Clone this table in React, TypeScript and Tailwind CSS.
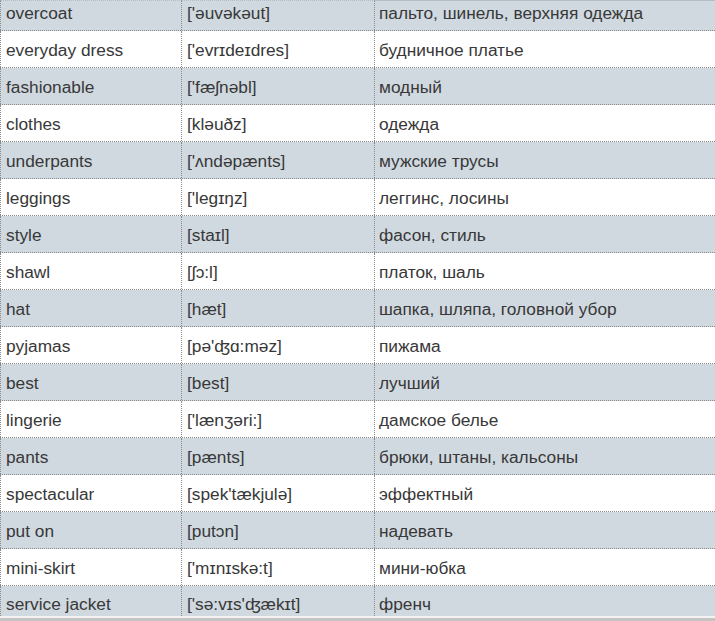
import React from "react";

const rows: [string, string, string][] = [
  ["overcoat", "['əuvəkəut]", "пальто, шинель, верхняя одежда"],
  ["everyday dress", "['evrɪdeɪdres]", "будничное платье"],
  ["fashionable", "['fæʃnəbl]", "модный"],
  ["clothes", "[kləuðz]", "одежда"],
  ["underpants", "['ʌndəpænts]", "мужские трусы"],
  ["leggings", "['legɪŋz]", "леггинс, лосины"],
  ["style", "[staɪl]", "фасон, стиль"],
  ["shawl", "[ʃɔ:l]", "платок, шаль"],
  ["hat", "[hæt]", "шапка, шляпа, головной убор"],
  ["pyjamas", "[pə'ʤɑ:məz]", "пижама"],
  ["best", "[best]", "лучший"],
  ["lingerie", "['lænʒəri:]", "дамское белье"],
  ["pants", "[pænts]", "брюки, штаны, кальсоны"],
  ["spectacular", "[spek'tækjulə]", "эффектный"],
  ["put on", "[putɔn]", "надевать"],
  ["mini-skirt", "['mɪnɪskə:t]", "мини-юбка"],
  ["service jacket", "['sə:vɪs'ʤækɪt]", "френч"],
];

export default function App() {
  return (
    <div
      className="w-[715px] h-[621px] overflow-hidden bg-white text-[#383838] text-[17.3px] leading-none"
      style={{ fontFamily: '"Liberation Sans", "DejaVu Sans", Arial, sans-serif' }}
    >
      <div className="flex flex-col">
        {rows.map((r, i) => {
          const first = i === 0;
          const last = i === rows.length - 1;
          const bg = i % 2 === 0 ? "bg-[#d0d9e0]" : "bg-white";
          const h = first
            ? "h-[30px] border-t border-t-[#b4bcc4] pb-[4px]"
            : last
            ? "h-[30px] pt-[8px]"
            : "h-[36px] pt-[4px]";
          return (
            <div
              key={i}
              className={`flex ${bg} ${last ? "" : "border-b border-dotted border-b-[#8a8a8a]"}`}
            >
              <div className={`${h} w-[182px] shrink-0 flex items-center pl-[5px] border-l border-r border-dotted border-l-[#8a8a8a] border-r-[#8a8a8a]`}>
                {r[0]}
              </div>
              <div className={`${h} w-[193px] shrink-0 flex items-center pl-[5px] border-r border-dotted border-r-[#8a8a8a]`}>
                {r[1]}
              </div>
              <div className={`${h} flex-1 flex items-center pl-[4px]`}>{r[2]}</div>
            </div>
          );
        })}
        <div className="h-[2px] bg-[#f2f2f2]" />
        <div className="h-[3px] bg-[#c4c4c4]" />
      </div>
    </div>
  );
}
